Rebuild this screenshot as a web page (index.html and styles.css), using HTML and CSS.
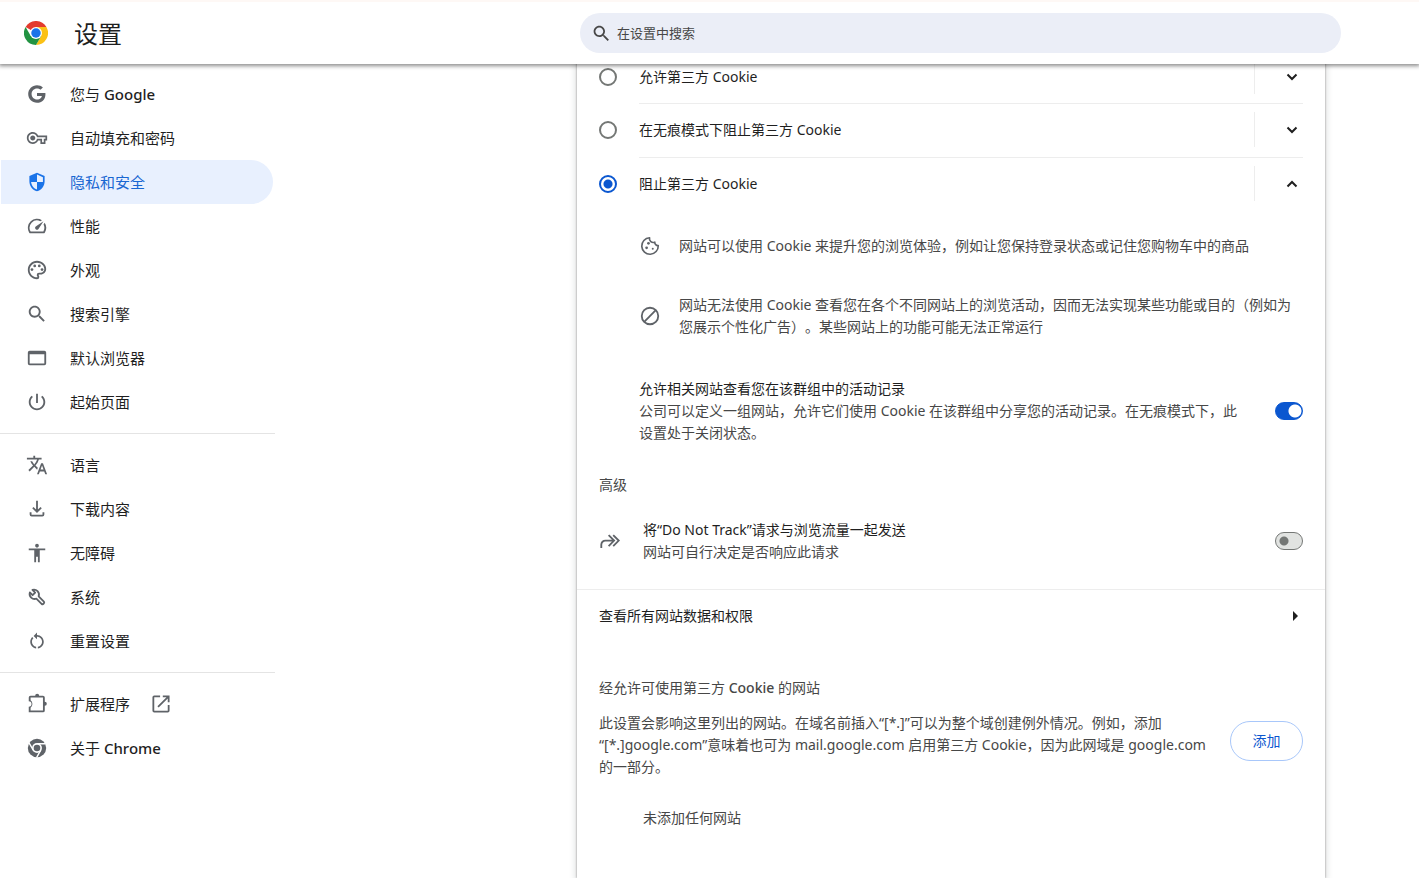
FILE: index.html
```html
<!DOCTYPE html>
<html lang="zh-CN">
<head>
<meta charset="utf-8">
<meta name="viewport" content="width=device-width, initial-scale=1">
<title>设置</title>
<link rel="stylesheet" href="styles.css">
</head>
<body>
<div class="app">
  <header class="topbar">
    <div class="brand">
      <svg class="brand-logo" viewBox="0 0 48 48" aria-hidden="true">
        <path fill="#e33b2e" d="M24 24 3.2 12A24 24 0 0 1 44.8 12L24 12z"/>
        <path fill="#fbc116" d="M24 12H44.8A24 24 0 0 1 24 48L34.4 30z"/>
        <path fill="#229342" d="M34.4 30 24 48A24 24 0 0 1 3.2 12L13.6 30z"/>
        <circle cx="24" cy="24" r="12" fill="#fff"/>
        <circle cx="24" cy="24" r="9.5" fill="#1a73e8"/>
      </svg>
      <h1 class="brand-title">设置</h1>
    </div>
    <label class="search">
      <svg class="search-icon" viewBox="0 0 24 24" aria-hidden="true"><path d="M15.500 14h-.79l-.28-.27C15.410 12.590 16 11.110 16 9.500 16 5.910 13.090 3 9.500 3S3 5.910 3 9.500 5.910 16 9.500 16c1.610 0 3.090-.59 4.230-1.570l.27.28v.79l5 4.990L20.490 19l-4.990-5zm-6 0C7.010 14 5 11.990 5 9.500S7.010 5 9.500 5 14 7.010 14 9.500 11.990 14 9.500 14z"/></svg>
      <input class="search-input" type="search" placeholder="在设置中搜索" aria-label="在设置中搜索">
    </label>
  </header>

  <div class="layout">
    <nav class="sidebar">
      <a class="nav-item" href="#people"><svg class="icon" viewBox="-1 -1 20 20"><path d="M16.580 8H9v2.750h4.470c-.24 1.200-1.420 3.270-4.470 3.270-2.720 0-4.930-2.250-4.930-5.020S6.280 3.980 9 3.980c1.540 0 2.570.66 3.170 1.220l2.190-2.120C12.970 1.790 11.160 1 9 1 4.580 1 1 4.580 1 9s3.580 8 8 8c4.620 0 7.680-3.250 7.680-7.820 0-.46-.04-.83-.1-1.180z"/></svg><span>您与 <b class="latin">Google</b></span></a>
      <a class="nav-item" href="#autofill"><svg class="icon" viewBox="-1 -1 26 26"><path d="M22 19h-6v-4h-2.680c-1.140 2.420-3.600 4-6.320 4-3.860 0-7-3.140-7-7s3.140-7 7-7c2.720 0 5.170 1.580 6.320 4H24v6h-2v4zm-4-2h2v-4h2v-2H11.940l-.23-.67C11.010 8.340 9.110 7 7 7c-2.760 0-5 2.240-5 5s2.240 5 5 5c2.110 0 4.010-1.340 4.710-3.330l.23-.67H18v4zM7 15c-1.650 0-3-1.350-3-3s1.350-3 3-3 3 1.350 3 3-1.350 3-3 3z"/></svg><span>自动填充和密码</span></a>
      <a class="nav-item nav-item-active" href="#privacy" aria-current="page"><svg class="icon" viewBox="-1 -1 26 26"><path fill-rule="evenodd" d="M12 1 3 5v6c0 5.550 3.840 10.740 9 12 5.160-1.260 9-6.450 9-12V5zM12 3.200V12h7V6.300zM12 12H5c.53 4.120 3.280 7.790 7 8.930z"/></svg><span>隐私和安全</span></a>
      <a class="nav-item" href="#performance"><svg class="icon" viewBox="0 0 24 24"><path d="m20.380 8.570-1.230 1.850a8 8 0 0 1-.22 7.580H5.070A8 8 0 0 1 15.580 6.850l1.850-1.230A10 10 0 0 0 3.350 19a2 2 0 0 0 1.720 1h13.850a2 2 0 0 0 1.740-1 10 10 0 0 0-.27-10.440zm-9.790 6.840a2 2 0 0 0 2.830 0l5.660-8.490-8.490 5.660a2 2 0 0 0 0 2.830z"/></svg><span>性能</span></a>
      <a class="nav-item" href="#appearance"><svg class="icon" viewBox="0 0 24 24"><path d="M12 22C6.490 22 2 17.510 2 12S6.490 2 12 2s10 4.040 10 9c0 3.310-2.690 6-6 6h-1.770c-.28 0-.5.22-.5.5 0 .12.05.23.13.33.41.47.64 1.060.64 1.670A2.500 2.500 0 0 1 12 22zm0-18c-4.410 0-8 3.590-8 8s3.590 8 8 8c.28 0 .5-.22.5-.5a.54.54 0 0 0-.14-.35c-.41-.46-.63-1.050-.63-1.650a2.500 2.500 0 0 1 2.500-2.500H16c2.210 0 4-1.790 4-4 0-3.860-3.590-7-8-7z"/><circle cx="6.500" cy="11.500" r="1.500"/><circle cx="9.500" cy="7.500" r="1.500"/><circle cx="14.500" cy="7.500" r="1.500"/><circle cx="17.500" cy="11.500" r="1.500"/></svg><span>外观</span></a>
      <a class="nav-item" href="#search"><svg class="icon" viewBox="0 0 24 24"><path d="M15.500 14h-.79l-.28-.27C15.410 12.590 16 11.110 16 9.500 16 5.910 13.090 3 9.500 3S3 5.910 3 9.500 5.910 16 9.500 16c1.610 0 3.090-.59 4.230-1.570l.27.28v.79l5 4.990L20.490 19l-4.990-5zm-6 0C7.010 14 5 11.990 5 9.500S7.010 5 9.500 5 14 7.010 14 9.500 11.990 14 9.500 14z"/></svg><span>搜索引擎</span></a>
      <a class="nav-item" href="#default-browser"><svg class="icon" viewBox="0 0 24 24"><path fill-rule="evenodd" d="M4 4h16a2 2 0 0 1 2 2v12a2 2 0 0 1-2 2H4a2 2 0 0 1-2-2V6a2 2 0 0 1 2-2zm0 4v10h16V8z"/></svg><span>默认浏览器</span></a>
      <a class="nav-item" href="#startup"><svg class="icon" viewBox="0 0 24 24"><path d="M13 3h-2v10h2V3zm4.830 2.170-1.420 1.420C17.990 7.860 19 9.810 19 12c0 3.870-3.130 7-7 7s-7-3.130-7-7c0-2.190 1.010-4.140 2.580-5.420L6.170 5.170C4.230 6.820 3 9.260 3 12c0 4.970 4.030 9 9 9s9-4.030 9-9c0-2.740-1.230-5.180-3.170-6.830z"/></svg><span>起始页面</span></a>
      <hr class="nav-divider">
      <a class="nav-item" href="#languages"><svg class="icon" viewBox="0 0 24 24"><path d="M12.870 15.070l-2.540-2.510.03-.03c1.740-1.940 2.980-4.170 3.710-6.530H17V4h-7V2H8v2H1v1.990h11.170C11.500 7.920 10.440 9.750 9 11.350 8.070 10.320 7.300 9.190 6.690 8h-2c.73 1.630 1.730 3.170 2.980 4.560l-5.090 5.020L4 19l5-5 3.110 3.110.76-2.040zM18.500 10h-2L12 22h2l1.120-3h4.750L21 22h2l-4.500-12zm-2.620 7l1.620-4.330L19.120 17h-3.240z"/></svg><span>语言</span></a>
      <a class="nav-item" href="#downloads"><svg class="icon icon-line" viewBox="0 0 24 24"><path d="M12 3v12M7.500 10.500l4.500 4.500 4.500-4.500M5 15.500V18a1.200 1.200 0 0 0 1.200 1.200h11.600A1.200 1.200 0 0 0 19 18v-2.500"/></svg><span>下载内容</span></a>
      <a class="nav-item" href="#accessibility"><svg class="icon" viewBox="0 0 24 24"><path d="M12 2c1.100 0 2 .9 2 2s-.9 2-2 2-2-.9-2-2 .9-2 2-2zm9 7h-6v13h-2v-6h-2v6H9V9H3V7h18v2z"/></svg><span>无障碍</span></a>
      <a class="nav-item" href="#system"><svg class="icon icon-line" viewBox="0 0 24 24"><path stroke-linejoin="round" d="M7 4.200 10 7.200 7.200 10 4.200 7A5.500 5.500 0 0 0 11.300 13.800L17 19.500a1.800 1.800 0 0 0 2.500-2.500L13.800 11.300A5.500 5.500 0 0 0 7 4.200z"/></svg><span>系统</span></a>
      <a class="nav-item" href="#reset"><svg class="icon" viewBox="-1 -1 26 26"><path d="M12 5V2L8 6l4 4V7c3.310 0 6 2.690 6 6 0 2.970-2.170 5.430-5 5.910v2.020c3.950-.49 7-3.850 7-7.930 0-4.420-3.580-8-8-8zm-6 8c0-1.650.67-3.150 1.760-4.240L6.340 7.340C4.900 8.790 4 10.790 4 13c0 4.080 3.050 7.440 7 7.930v-2.020c-2.830-.48-5-2.940-5-5.910z"/></svg><span>重置设置</span></a>
      <hr class="nav-divider">
      <a class="nav-item" href="#extensions"><svg class="icon" viewBox="0 0 24 24"><path fill-rule="evenodd" d="M5 3h5a2.200 2.200 0 0 1 4.400 0H18.500a2 2 0 0 1 2 2v4.500a2.200 2.200 0 0 1 0 4.400V19a2 2 0 0 1-2 2H3v-6a3 3 0 0 0 0-6V5a2 2 0 0 1 2-2zm0 2v3a5 5 0 0 1 0 8v3h13.500V5z"/></svg><span>扩展程序</span><svg class="icon icon-external" viewBox="2 2 20 20"><path d="M19.500 19.500h-15v-15H11v-2H4.500a2 2 0 0 0-2 2v15a2 2 0 0 0 2 2h15a2 2 0 0 0 2-2V13h-2zM14 2.500v2h4.100L8 14.600 9.400 16 19.500 5.900V10h2V2.500z"/></svg></a>
      <a class="nav-item" href="#about"><svg class="icon" viewBox="0 0 24 24"><circle cx="12" cy="12" r="10"/><circle cx="12" cy="12" r="5.400" fill="#fff"/><path d="M12 7.300h9.200M7.900 14.400 3.300 6.400M16.100 14.400 11.500 22.400" stroke="#fff" stroke-width="1.500"/><circle cx="12" cy="12" r="3.600"/></svg><span>关于 <b class="latin">Chrome</b></span></a>
    </nav>

    <main class="card">
      <div class="option">
        <input class="radio" type="radio" name="cookies" id="allow">
        <div class="option-body"><label class="option-label" for="allow">允许第三方 Cookie</label><button class="expand" type="button" aria-label="展开"><svg class="chevron" viewBox="0 0 12 12"><path d="m1.500 3.500 4.500 4.500 4.500-4.500"/></svg></button></div>
      </div>
      <div class="option">
        <input class="radio" type="radio" name="cookies" id="incognito">
        <div class="option-body option-ruled"><label class="option-label" for="incognito">在无痕模式下阻止第三方 Cookie</label><button class="expand" type="button" aria-label="展开"><svg class="chevron" viewBox="0 0 12 12"><path d="m1.500 3.500 4.500 4.500 4.500-4.500"/></svg></button></div>
      </div>
      <div class="option">
        <input class="radio" type="radio" name="cookies" id="block" checked>
        <div class="option-body option-ruled"><label class="option-label" for="block">阻止第三方 Cookie</label><button class="expand" type="button" aria-label="收起"><svg class="chevron" viewBox="0 0 12 12"><path d="m1.500 8.500 4.500-4.500 4.500 4.500"/></svg></button></div>
      </div>

      <div class="details">
        <div class="detail">
          <svg class="icon" viewBox="0 0 24 24"><path fill="none" stroke="currentColor" stroke-width="1.800" stroke-linejoin="round" d="M11.500 3a9 9 0 1 0 9.500 8.600 3.500 3.500 0 0 1-3.800-3.800A4.200 4.200 0 0 1 11.500 3z"/><circle cx="10.300" cy="9" r="1.500"/><circle cx="8.300" cy="14" r="1.500"/><circle cx="15" cy="15" r="1.100"/></svg>
          <p class="detail-text">网站可以使用 Cookie 来提升您的浏览体验，例如让您保持登录状态或记住您购物车中的商品</p>
        </div>
        <div class="detail">
          <svg class="icon icon-line" viewBox="0 0 24 24"><circle cx="12" cy="12" r="9"/><path d="M5.700 18.300 18.300 5.700"/></svg>
          <p class="detail-text">网站无法使用 Cookie 查看您在各个不同网站上的浏览活动，因而无法实现某些功能或目的（例如为您展示个性化广告）。某些网站上的功能可能无法正常运行</p>
        </div>
        <div class="setting related">
          <label class="setting-text" for="related"><span class="setting-title">允许相关网站查看您在该群组中的活动记录</span><span class="setting-sub">公司可以定义一组网站，允许它们使用 Cookie 在该群组中分享您的活动记录。在无痕模式下，此设置处于关闭状态。</span></label>
          <input class="toggle" type="checkbox" role="switch" id="related" checked>
        </div>
      </div>

      <h2 class="section-title">高级</h2>
      <div class="setting dnt">
        <svg class="icon icon-line" viewBox="0 0 24 24"><path d="M2.500 19.500V16A4.500 4.500 0 0 1 7 11.500h8.500M10.500 5.500l6 6-6 6M15.500 5.500l6 6-6 6"/></svg>
        <label class="setting-text" for="dnt"><span class="setting-title">将“Do Not Track”请求与浏览流量一起发送</span><span class="setting-sub">网站可自行决定是否响应此请求</span></label>
        <input class="toggle" type="checkbox" role="switch" id="dnt">
      </div>

      <a class="link-row" href="#all-sites"><span>查看所有网站数据和权限</span><svg class="arrow" viewBox="0 0 16 16"><path d="M6 3l5 5-5 5z"/></svg></a>

      <h2 class="section-title">经允许可使用第三方 <b class="latin">Cookie</b> 的网站</h2>
      <div class="exceptions">
        <p class="exceptions-text">此设置会影响这里列出的网站。在域名前插入“[*.]”可以为整个域创建例外情况。例如，添加“[*.]google.com”意味着也可为 mail.google.com 启用第三方 Cookie，因为此网域是 google.com 的一部分。</p>
        <button class="add-button" type="button">添加</button>
      </div>
      <p class="empty">未添加任何网站</p>
    </main>
  </div>
</div>
</body>
</html>
```
FILE: styles.css
```css
* {
  box-sizing: border-box;
}

body {
  margin: 0;
  background: #fff;
  color: #1f1f1f;
  font-family: "Noto Sans", "Noto Sans CJK SC", sans-serif;
  font-size: 14px;
  line-height: 22px;
  text-spacing-trim: space-all;
}

h1, h2, p {
  margin: 0;
  font-weight: 400;
}

.latin {
  font-weight: 500;
}

.app {
  display: flex;
  flex-direction: column;
  height: 100vh;
}

/* Top bar */
.topbar {
  position: relative;
  z-index: 1;
  flex: none;
  display: grid;
  grid-template-columns: minmax(200px, 580fr) minmax(0, 761px) 78fr;
  align-items: center;
  height: 64px;
  border-top: 2px solid #fef8f5;
  background: #fff;
  box-shadow: 0 1px 4px 1px rgba(0, 0, 0, 0.45);
}

.brand {
  display: flex;
  align-items: center;
  gap: 26px;
  padding-left: 24px;
}

.brand-logo {
  width: 24px;
  height: 24px;
}

.brand-title {
  padding-top: 2px;
  font-size: 24px;
  line-height: 32px;
}

.search {
  display: flex;
  align-items: center;
  gap: 5px;
  height: 40px;
  padding: 0 20px 0 11px;
  border-radius: 20px;
  background: #ebeef7;
}

.search-icon {
  width: 21px;
  height: 21px;
  fill: #474747;
}

.search-input {
  flex: 1;
  min-width: 0;
  padding: 0;
  border: 0;
  outline: 0;
  background: none;
  color: #474747;
  font: inherit;
  font-size: 13px;
}

.search-input::placeholder {
  color: #474747;
}

/* Page columns */
.layout {
  flex: 1;
  min-height: 0;
  display: grid;
  grid-template-columns: minmax(290px, 577fr) minmax(0, 748px) 94fr;
  overflow: hidden;
}

/* Sidebar */
.sidebar {
  width: 275px;
  padding-top: 8px;
}

.nav-item {
  display: flex;
  align-items: center;
  gap: 22px;
  height: 44px;
  margin: 0 2px 0 1px;
  padding-left: 25px;
  border-radius: 0 22px 22px 0;
  color: #1f1f1f;
  font-size: 15px;
  text-decoration: none;
}

.nav-item-active {
  background: #e8f0fe;
  color: #1967d2;
}

.nav-divider {
  height: 1px;
  margin: 9px 0;
  border: 0;
  background: #e4e4e4;
}

.icon {
  flex: none;
  width: 22px;
  height: 22px;
  fill: currentColor;
  color: #5f6368;
}

.icon-external {
  width: 18px;
  height: 18px;
}

.nav-item-active .icon {
  color: #1a73e8;
}

.icon-line {
  fill: none;
  stroke: currentColor;
  stroke-width: 2;
}

/* Content card, scrolled slightly under the top bar */
.card {
  margin-top: -14px;
  padding-bottom: 40px;
  box-shadow: 0 0 2px rgba(0, 0, 0, 0.4), 0 2px 6px 2px rgba(60, 64, 67, 0.15);
}

.option {
  display: flex;
  align-items: center;
  gap: 22px;
  padding: 0 22px;
}

.radio {
  appearance: none;
  flex: none;
  width: 18px;
  height: 18px;
  margin: 0;
  border: 2px solid #747775;
  border-radius: 50%;
}

.radio:checked {
  border-color: #0b57d0;
  background: radial-gradient(circle, #0b57d0 0 4px, #fff 5px);
}

.option-body {
  flex: 1;
  display: flex;
  align-items: center;
  height: 53px;
}

.option-ruled {
  height: 54px;
  padding-bottom: 2px;
  border-top: 1px solid #ededed;
}

.option-label {
  flex: 1;
}

.expand {
  display: grid;
  place-items: center;
  width: 49px;
  height: 35px;
  padding: 0 0 0 26px;
  border: 0;
  border-left: 1px solid #ededed;
  background: none;
}

.chevron {
  width: 12px;
  height: 12px;
  fill: none;
  stroke: #1f1f1f;
  stroke-width: 2;
}

.details {
  padding: 0 22px 0 62px;
}

.detail {
  display: flex;
  align-items: center;
  gap: 18px;
  min-height: 70px;
}

.detail-text {
  flex: 1;
  color: #474747;
}

.setting {
  display: flex;
  align-items: center;
  gap: 26px;
}

.setting-text {
  flex: 1;
}

.setting-title,
.setting-sub {
  display: block;
}

.setting-sub {
  color: #474747;
}

.related {
  padding: 27px 0 30px;
}

.toggle {
  appearance: none;
  flex: none;
  width: 28px;
  height: 18px;
  margin: 0;
  border: 1px solid #747775;
  border-radius: 9px;
  background: radial-gradient(circle at 8px 8px, #747775 0 4px, #e1e3e1 5px);
}

.toggle:checked {
  border-color: #0b57d0;
  background: radial-gradient(circle at 19px 8px, #fff 0 6px, #0b57d0 7px);
}

.section-title {
  padding: 0 22px;
  color: #474747;
  font-size: 14px;
}

.dnt {
  gap: 22px;
  padding: 23px 22px 26px;
}

.link-row {
  display: flex;
  align-items: center;
  justify-content: space-between;
  height: 53px;
  margin-bottom: 35px;
  padding: 0 22px;
  border-top: 1px solid #ededed;
  color: #1f1f1f;
  text-decoration: none;
}

.arrow {
  width: 16px;
  height: 16px;
  fill: #1f1f1f;
}

.exceptions {
  display: flex;
  align-items: center;
  gap: 20px;
  padding: 4px 22px 0;
}

.exceptions-text {
  flex: 1;
  padding-top: 9px;
  color: #474747;
}

.add-button {
  width: 73px;
  height: 40px;
  border: 1px solid #a8c7fa;
  border-radius: 20px;
  background: #fff;
  color: #0b57d0;
  font: inherit;
}

.empty {
  padding: 29px 22px 0 66px;
  color: #474747;
}
```
